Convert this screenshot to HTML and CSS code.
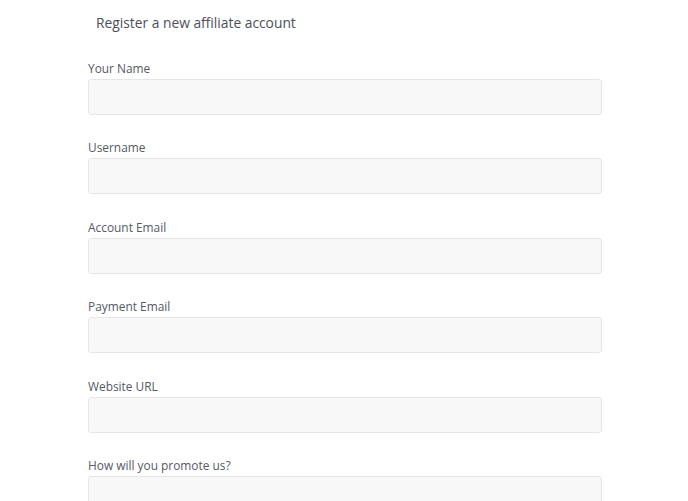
FILE: index.html
```html
<!DOCTYPE html>
<html lang="en">
<head>
    <meta charset="UTF-8">
    <meta name="viewport" content="width=device-width, initial-scale=1.0">
    <title>Affiliate Registration</title>
    <link rel="stylesheet" href="styles.css">
</head>
<body>
    <div class="register">
        <h3>Register a new affiliate account</h3>
        <form>
            <div class="field">
                <label for="name">Your Name</label>
                <input type="text" id="name">
            </div>
            <div class="field">
                <label for="username">Username</label>
                <input type="text" id="username">
            </div>
            <div class="field">
                <label for="accountEmail">Account Email</label>
                <input type="email" id="accountEmail">
            </div>
            <div class="field">
                <label for="paymentEmail">Payment Email</label>
                <input type="email" id="paymentEmail">
            </div>
            <div class="field">
                <label for="website">Website URL</label>
                <input type="text" id="website">
            </div>
            <div class="field">
                <label for="promote">How will you promote us?</label>
                <textarea id="promote"></textarea>
            </div>
        </form>
    </div>
</body>
</html>
```

FILE: styles.css
```css
body {
    font-family: "Open Sans", Arial, sans-serif;
    margin: 0;
    padding: 0;
    background-color: #fff;
    color: #50555f;
}

.register {
    width: 514px;
    margin-left: 88px;
    padding-top: 13px;
}

h3 {
    margin: 0 0 25px 8px;
    font-size: 13.8px;
    font-weight: normal;
    line-height: 20px;
    color: #4a4f5a;
}

.field {
    margin-bottom: 22.4px;
}

label {
    display: block;
    font-size: 11.9px;
    line-height: 18px;
    padding-top: 1px;
    margin-bottom: 2px;
    color: #555a64;
}

input, textarea {
    display: block;
    box-sizing: border-box;
    width: 100%;
    height: 36px;
    margin: 0;
    border: 1px solid #e6e6e6;
    border-radius: 3px;
    background-color: #f8f8f8;
    font-family: inherit;
    font-size: 13px;
}

textarea {
    height: 80px;
    resize: none;
}
```
